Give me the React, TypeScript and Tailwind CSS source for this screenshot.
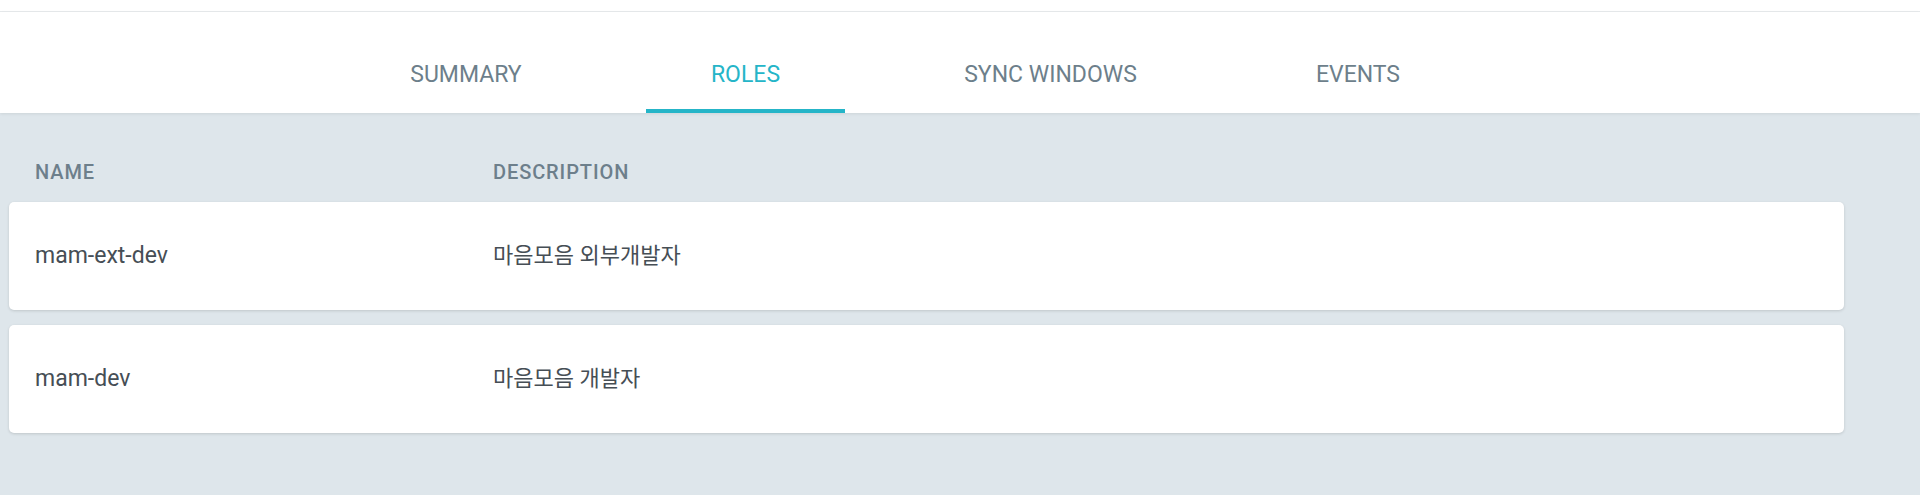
import React from "react";

const tabs = [
  { label: "SUMMARY", w: "w-[360px]", active: false },
  { label: "ROLES", w: "w-[199px]", active: true },
  { label: "SYNC WINDOWS", w: "w-[411px]", active: false },
  { label: "EVENTS", w: "w-[204px]", active: false },
];

const rows = [
  { name: "mam-ext-dev", desc: "마음모음 외부개발자" },
  { name: "mam-dev", desc: "마음모음 개발자" },
];

export default function App() {
  return (
    <div
      className="min-h-[495px] w-full bg-[#dee6eb]"
      style={{ fontFamily: 'Roboto, "Noto Sans CJK KR", sans-serif' }}
    >
      <div className="h-[12px] bg-white border-b border-[#e7eaec]" />
      <div className="relative z-10 h-[101px] bg-white shadow-[0_1px_3px_rgba(0,0,0,0.08)]">
        <div className="flex h-full pl-[286px]">
          {tabs.map((t) => (
            <div key={t.label} className={`${t.w} flex h-full flex-col`}>
              <div
                className={`pt-[49px] text-center text-[23px] leading-[27px] ${
                  t.active ? "text-[#25b5c8]" : "text-[#6d7f8b]"
                }`}
              >
                {t.label}
              </div>
              <div
                className={`mt-auto h-[4px] ${t.active ? "bg-[#25b5c8]" : "bg-transparent"}`}
              />
            </div>
          ))}
        </div>
      </div>
      <div className="pl-[9px] pr-[76px] pt-[47px] pb-[40px]">
        <div className="grid grid-cols-[458px_1fr] px-[26px] text-[20px] font-medium leading-[24px] tracking-[0.9px] text-[#6d7f8b]">
          <div>NAME</div>
          <div>DESCRIPTION</div>
        </div>
        <div className="mt-[18px] flex flex-col gap-[15px]">
          {rows.map((r) => (
            <div
              key={r.name}
              className="grid h-[108px] grid-cols-[458px_1fr] items-center rounded-[5px] bg-white px-[26px] leading-[28px] text-[#464e55] shadow-[0_1px_3px_rgba(0,0,0,0.14)]"
            >
              <div className="text-[23px]">{r.name}</div>
              <div className="text-[22px]">{r.desc}</div>
            </div>
          ))}
        </div>
      </div>
    </div>
  );
}
